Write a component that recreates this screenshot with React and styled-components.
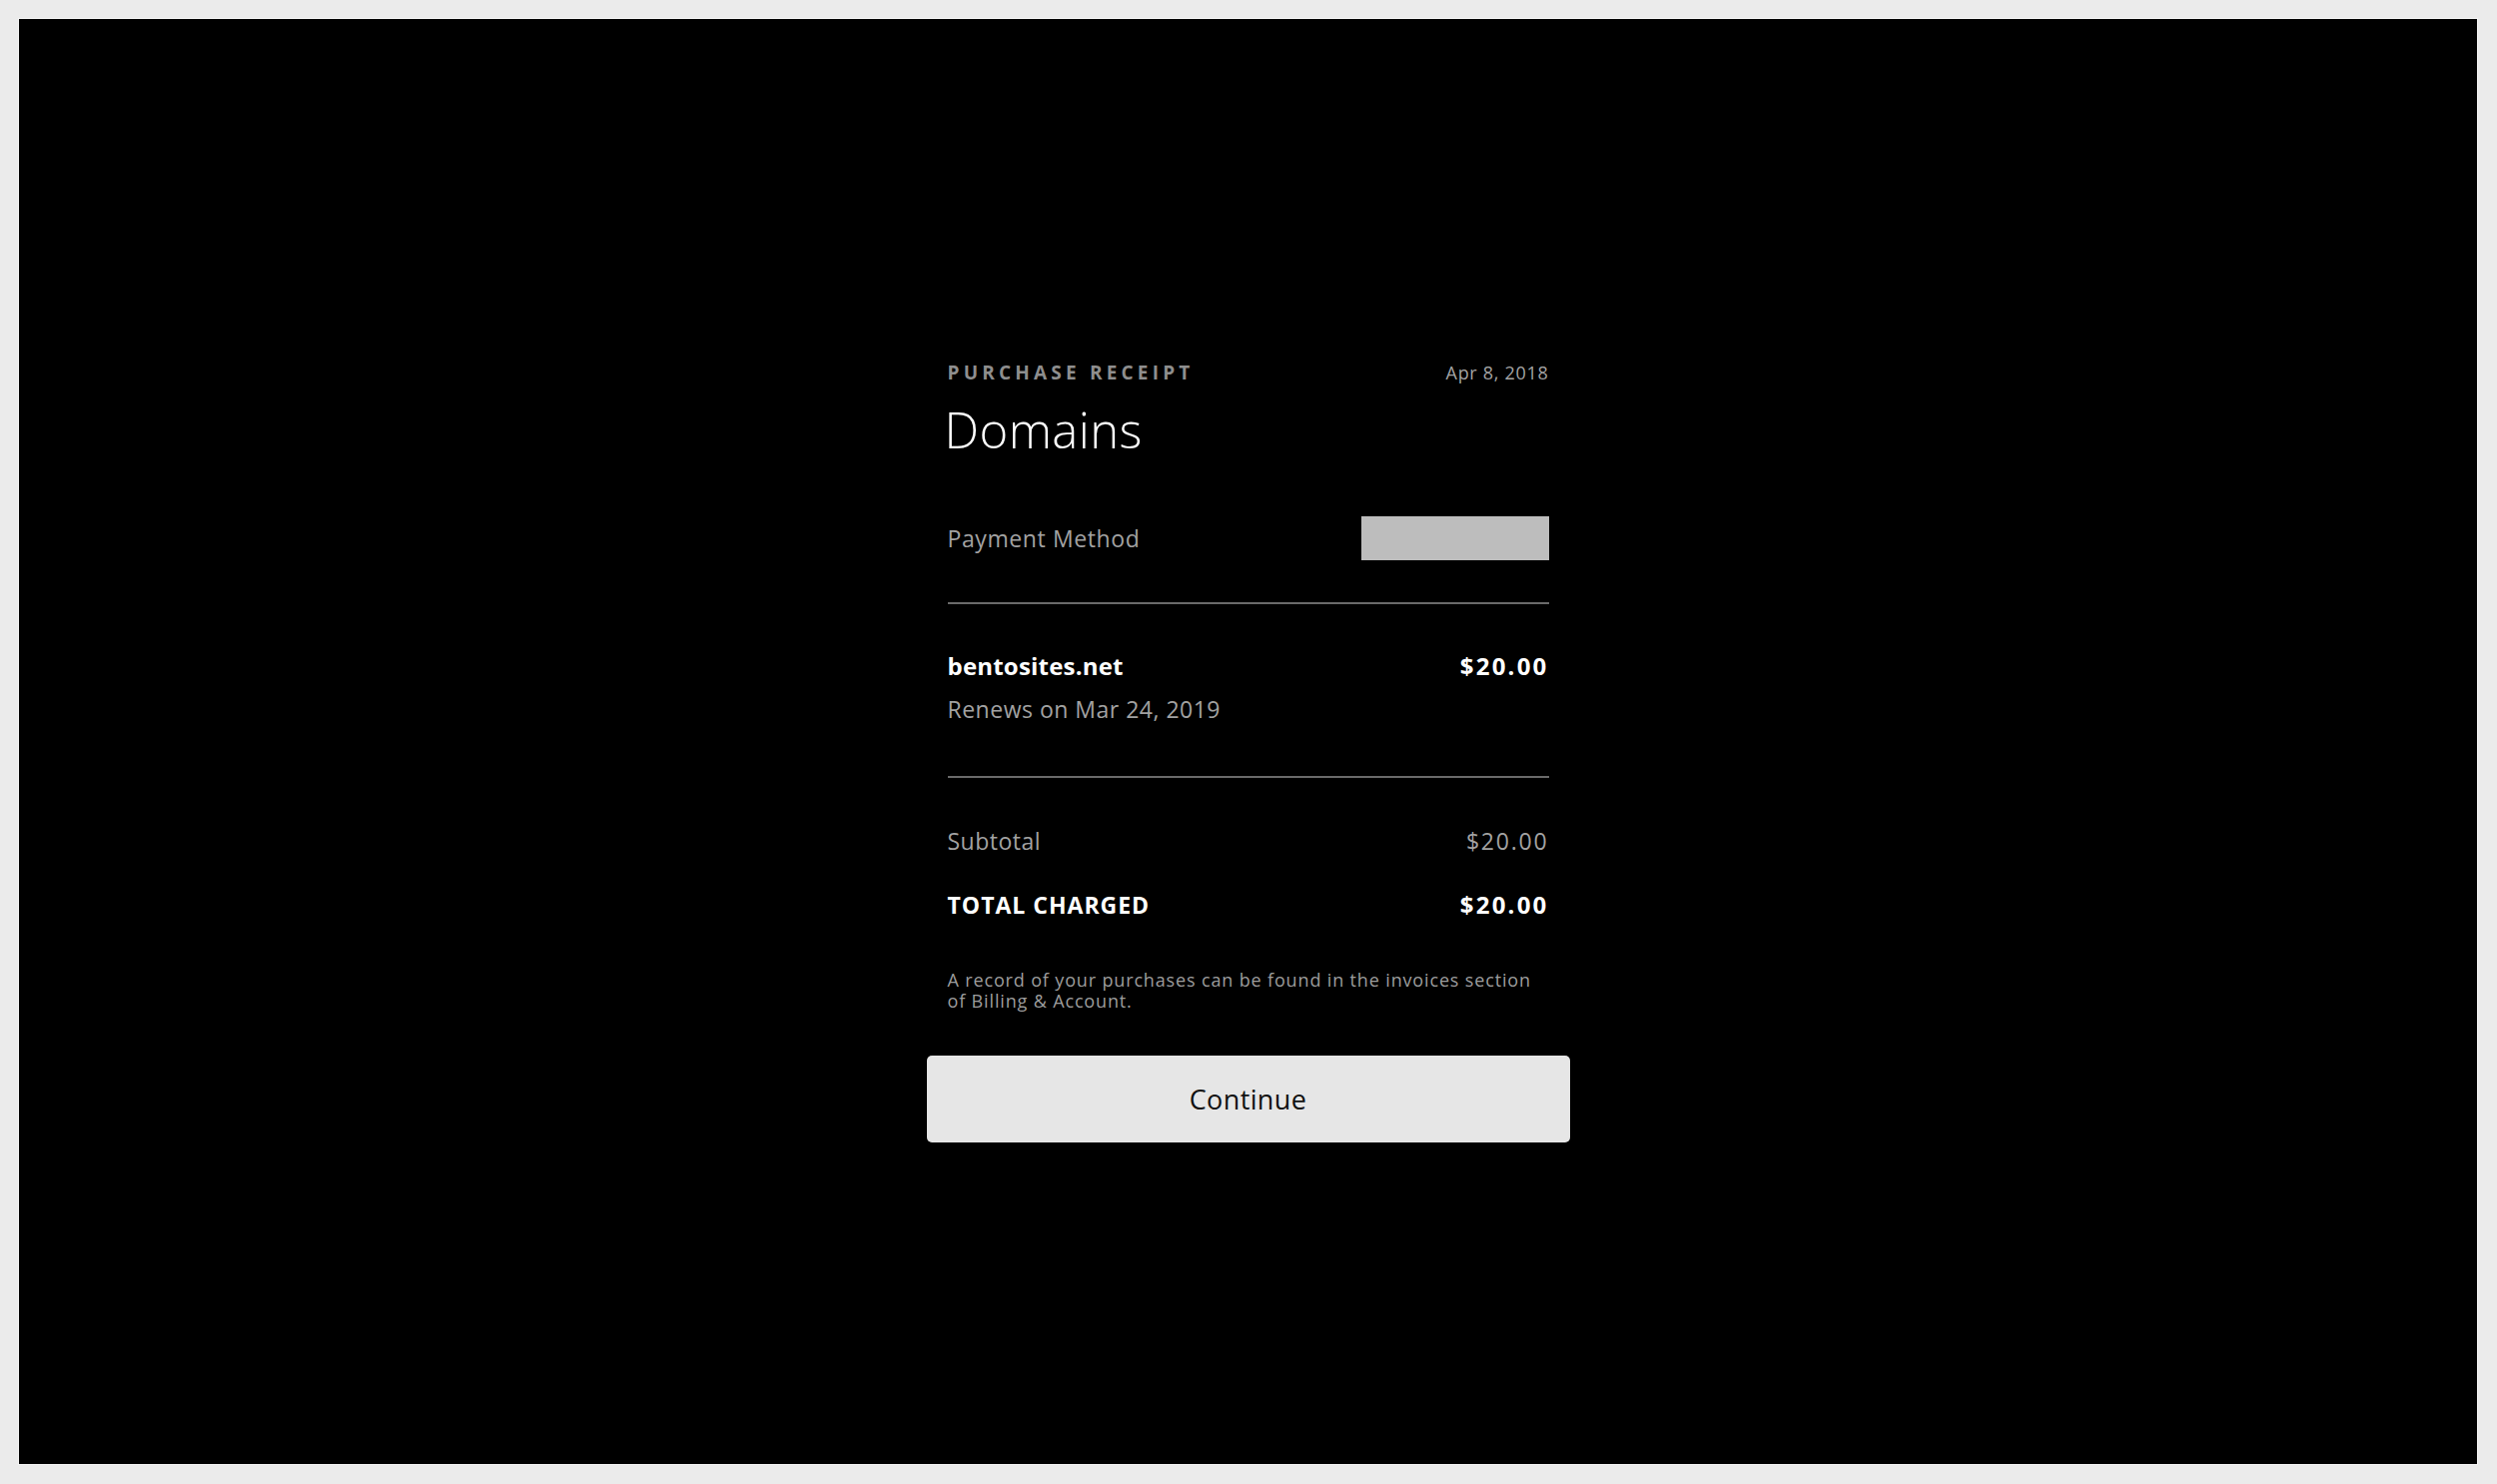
import React from 'react';
import styled, {createGlobalStyle} from 'styled-components';

const GlobalStyle = createGlobalStyle`
html, body {
    margin: 0;
    padding: 0;
    background: #ebebeb;
    font-family: "Open Sans", "Liberation Sans", sans-serif;
}
`

const Frame = styled.div`
padding: 19px 20px 20px 19px;
`

const Panel = styled.div`
height: 1447px;
background: #000;
box-shadow: 0 0 0 1px #f7f7f7;
padding-top: 342px;
box-sizing: border-box;
`

const Receipt = styled.div`
width: 602px;
margin: 0 auto;
`

const HeaderRow = styled.div`
display: flex;
justify-content: space-between;
align-items: baseline;
height: 24px;
line-height: 24px;
`

const Eyebrow = styled.span`
font-size: 19px;
font-weight: 700;
letter-spacing: 4.2px;
color: #8e8e8e;
`

const DateText = styled.span`
font-size: 18px;
letter-spacing: 0.7px;
color: #a3a3a3;
`

const Title = styled.h1`
margin: 17px 0 0 -3px;
font-size: 49px;
font-weight: 300;
line-height: 56px;
letter-spacing: 0.4px;
color: #fff;
`

const Row = styled.div`
display: flex;
justify-content: space-between;
align-items: ${props => props.align || "baseline"};
margin-top: ${props => props.top || "0"};
`

const Label = styled.span`
font-size: ${props => props.size || "23px"};
line-height: 30px;
font-weight: ${props => props.bold ? 700 : 400};
color: ${props => props.bold ? "#fff" : "#a2a2a2"};
letter-spacing: ${props => props.spacing || "0"};
`

const CardMask = styled.div`
width: 188px;
height: 44px;
background: #bdbdbd;
`

const Divider = styled.hr`
border: none;
height: 2px;
margin: ${props => props.top} 0 0;
background: #6a6a6a;
`

const Note = styled.p`
margin: 50px 0 0;
font-size: 18px;
line-height: 21px;
letter-spacing: 0.85px;
color: #9c9c9c;
white-space: nowrap;
`

const Button = styled.button`
display: block;
width: 644px;
height: 87px;
margin: 44px 0 0 -21px;
border: none;
border-radius: 5px;
background: #e6e6e6;
color: #111;
font-family: "Open Sans", "Liberation Sans", sans-serif;
font-size: 27px;
letter-spacing: 0.4px;
cursor: pointer;
`

export default function App() {
    return (
        <>
            <GlobalStyle />
            <Frame>
                <Panel>
                    <Receipt>
                        <HeaderRow>
                            <Eyebrow>PURCHASE RECEIPT</Eyebrow>
                            <DateText>Apr 8, 2018</DateText>
                        </HeaderRow>
                        <Title>Domains</Title>

                        <Row align="center" top="59px">
                            <Label spacing="0.6px">Payment Method</Label>
                            <CardMask />
                        </Row>

                        <Divider top="42px" />

                        <Row top="47px">
                            <Label bold size="24px" spacing="0.2px">bentosites.net</Label>
                            <Label bold size="24px" spacing="2.2px">$20.00</Label>
                        </Row>
                        <Row top="13px">
                            <Label spacing="0.5px">Renews on Mar 24, 2019</Label>
                        </Row>

                        <Divider top="52px" />

                        <Row top="48px">
                            <Label spacing="0.5px">Subtotal</Label>
                            <Label spacing="1.8px">$20.00</Label>
                        </Row>
                        <Row top="34px">
                            <Label bold spacing="1px">TOTAL CHARGED</Label>
                            <Label bold size="24px" spacing="2.2px">$20.00</Label>
                        </Row>

                        <Note>
                            A record of your purchases can be found in the invoices section<br />
                            of Billing &amp; Account.
                        </Note>

                        <Button>Continue</Button>
                    </Receipt>
                </Panel>
            </Frame>
        </>
    )
}
